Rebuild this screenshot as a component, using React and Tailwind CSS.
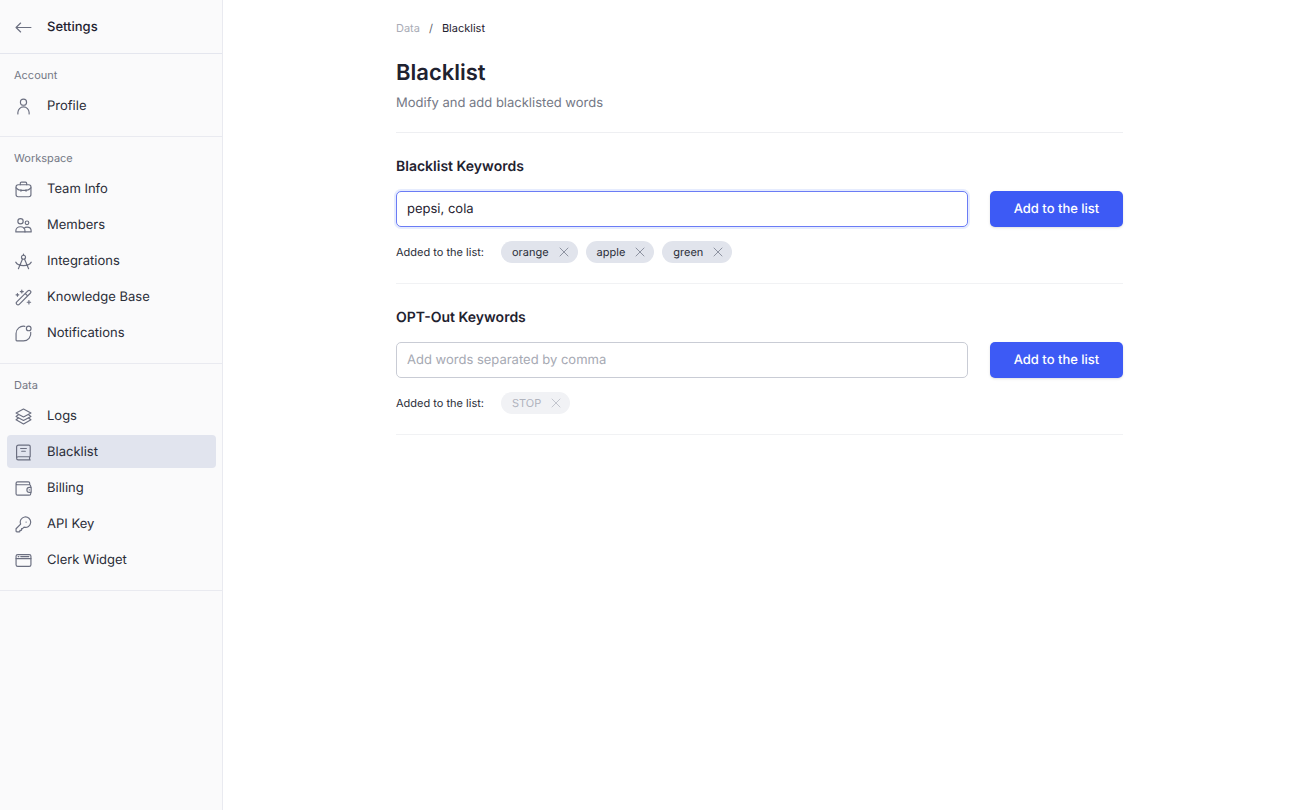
import React, { useState } from 'react';
import clsx from 'clsx';

const Icon = ({ children }) => (
  <svg
    viewBox="0 0 16 16"
    className="w-[17px] h-[17px] shrink-0 text-[#6b6f80]"
    fill="none"
    stroke="currentColor"
    strokeWidth="1.1"
    strokeLinecap="round"
    strokeLinejoin="round"
    aria-hidden="true"
  >
    {children}
  </svg>
);

const BackIcon = () => (
  <Icon>
    <path d="M15 8H1M5.3 3.8L1 8l4.3 4.2" />
  </Icon>
);

const ProfileIcon = () => (
  <Icon>
    <circle cx="8" cy="3.9" r="2.9" />
    <path d="M2.7 15v-1.3a5.3 5.3 0 0 1 10.6 0V15" />
  </Icon>
);

const TeamIcon = () => (
  <Icon>
    <rect x="1" y="3.5" width="14" height="11.3" rx="2" />
    <path d="M5 3.5V2.3C5 1.6 5.5 1 6.2 1h3.6c.7 0 1.2.6 1.2 1.3v1.2" />
    <path d="M1 6.4c1.2 1.4 2.7 2.2 4.6 2.5h4.8c1.9-.3 3.4-1.1 4.6-2.5M5.6 8v1.6M10.4 8v1.6" />
  </Icon>
);

const MembersIcon = () => (
  <Icon>
    <circle cx="5.2" cy="4" r="2.5" />
    <circle cx="11.3" cy="5.5" r="1.7" />
    <path d="M.8 14v-.9c0-2.2 1.800-3.9 4.3-3.9s4.3 1.7 4.3 3.9v.9z" />
    <path d="M9.4 14h5.800v-.9c0-2-1.6-3.5-3.8-3.5-1.2 0-2.2.4-2.9 1.1" />
  </Icon>
);

const IntegrationsIcon = () => (
  <Icon>
    <circle cx="8" cy="4" r="1.9" />
    <path d="M8 2.1V1M7.1 5.7L3.2 14.8M8.9 5.7l3.9 9.1M.7 8.6c1.2 2.1 4 3.3 7.3 3.3s6.1-1.2 7.3-3.3" />
  </Icon>
);

const KnowledgeIcon = () => (
  <Icon>
    <path d="M12.1 1.7a1.6 1.6 0 0 1 2.3 2.3L4 14.4a1.6 1.6 0 0 1-2.3-2.3zM9.6 4.2l2.3 2.3" />
    <path d="M6.4 1v2.8M5 2.4h2.8M2.3 4.2v2.6M1 5.5h2.6M13.1 10.9v3.2M11.5 12.5h3.2" />
  </Icon>
);

const NotificationsIcon = () => (
  <Icon>
    <circle cx="12.9" cy="3.2" r="2.2" />
    <path d="M9.3 1.3A6.9 6.9 0 0 0 1 8.1v6.1c0 .4.3.7.7.7h6.2a6.9 6.9 0 0 0 6.9-8.1" />
  </Icon>
);

const LogsIcon = () => (
  <Icon>
    <path d="M8 1l7 3.7-7 3.7-7-3.7z" />
    <path d="M3.2 6.3L1 7.9l7 3.8 7-3.8-2.2-1.6" />
    <path d="M3.2 9.5L1 11.1l7 3.9 7-3.9-2.2-1.6" />
  </Icon>
);

const BlacklistIcon = () => (
  <Icon>
    <path d="M14.3 12V2.3c0-.7-.6-1.3-1.3-1.3H3.4c-1.1 0-1.9.8-1.9 1.9v10.6M14.3 12H3a1.5 1.5 0 0 0 0 3h11.3M13.7 12v3" />
    <path d="M5.3 4.2h5.4M6.3 6.8h3.4" />
  </Icon>
);

const BillingIcon = () => (
  <Icon>
    <path d="M14.8 6.6V5.9c0-.8-.6-1.4-1.4-1.4h-11a1.4 1.4 0 0 1 0-2.8h10.2c.7 0 1.2.5 1.2 1.2v1.6M1 3.1v9.8c0 .8.6 1.4 1.4 1.4h11c.8 0 1.4-.6 1.4-1.4v-.8" />
    <path d="M15.2 7h-1.7a2.3 2.3 0 0 0 0 4.6h1.7zM13.4 9.3h.1" />
  </Icon>
);

const KeyIcon = () => (
  <Icon>
    <path d="M5.3 7.6a4.9 4.9 0 1 1 3.2 2.9l-1.4 1.4h-.9V13c0 .3-.3.6-.6.6h-1v.8c0 .3-.3.6-.6.6H1.8c-.5 0-.8-.3-.8-.8V12z" />
    <path d="M10.4 5.7h.1" />
  </Icon>
);

const WidgetIcon = () => (
  <Icon>
    <rect x="1" y="2.4" width="14" height="11.2" rx="1.6" />
    <path d="M1 6.2h14M3 4.3h.6M5.4 4.3H13" />
  </Icon>
);

const sections = [
  {
    title: 'Account',
    items: [{ label: 'Profile', icon: ProfileIcon }],
  },
  {
    title: 'Workspace',
    items: [
      { label: 'Team Info', icon: TeamIcon },
      { label: 'Members', icon: MembersIcon },
      { label: 'Integrations', icon: IntegrationsIcon },
      { label: 'Knowledge Base', icon: KnowledgeIcon },
      { label: 'Notifications', icon: NotificationsIcon },
    ],
  },
  {
    title: 'Data',
    items: [
      { label: 'Logs', icon: LogsIcon },
      { label: 'Blacklist', icon: BlacklistIcon, active: true },
      { label: 'Billing', icon: BillingIcon },
      { label: 'API Key', icon: KeyIcon },
      { label: 'Clerk Widget', icon: WidgetIcon },
    ],
  },
];

const Sidebar = () => (
  <aside className="w-[223px] shrink-0 bg-[#fafafb] border-r border-[#e9eaf0]">
    <a href="#" className="flex items-center gap-[15px] h-[54px] pt-[2px] px-[15px] border-b border-[#e4e6ee] text-[13px] leading-[21px] font-medium text-[#1f2230]">
      <BackIcon />
      Settings
    </a>

    {sections.map((section) => (
      <nav key={section.title} aria-label={section.title} className="pl-[7px] pr-[6px] pt-[13px] pb-[14px] border-b border-[#e9eaf0]">
        <h2 className="px-[7px] mb-[6px] text-[11px] leading-4 text-[#747885]">{section.title}</h2>
        <ul className="flex flex-col gap-[3px]">
          {section.items.map(({ label, icon: ItemIcon, active }) => (
            <li key={label}>
              <a
                href="#"
                aria-current={active ? 'page' : undefined}
                className={clsx(
                  'flex items-center gap-[15px] h-[33px] pt-[2px] px-2 rounded text-[13px] leading-[21px] text-[#2a2d38]',
                  active ? 'bg-[#e1e4ee]' : 'hover:bg-[#f0f1f6]'
                )}
              >
                <ItemIcon />
                {label}
              </a>
            </li>
          ))}
        </ul>
      </nav>
    ))}
  </aside>
);

const Chip = ({ label, disabled, onRemove }) => (
  <li
    className={clsx(
      'flex items-center gap-[10px] h-[22px] pl-[11px] pr-[9px] rounded-full text-[11px] leading-4',
      disabled ? 'bg-[#f1f2f5] text-[#b0b3bd]' : 'bg-[#e1e4ec] text-[#2a2d38]'
    )}
  >
    {label}
    <button type="button" aria-label={`Remove ${label}`} disabled={disabled} onClick={onRemove}>
      <svg
        viewBox="0 0 10 10"
        className={clsx('w-[10px] h-[10px]', disabled ? 'text-[#c3c6ce]' : 'text-[#8e93a1]')}
        fill="none"
        stroke="currentColor"
        strokeLinecap="round"
      >
        <path d="M1 1l8 8M9 1L1 9" />
      </svg>
    </button>
  </li>
);

const KeywordSection = ({ id, title, initialValue = '', initialWords, highlighted, locked }) => {
  const [value, setValue] = useState(initialValue);
  const [words, setWords] = useState(initialWords);

  const addWords = (e) => {
    e.preventDefault();
    const added = value.split(',').map((w) => w.trim()).filter((w) => w && !words.includes(w));
    setWords([...words, ...added]);
    setValue('');
  };

  return (
    <section className="pt-[22px] pb-5 border-b border-[#f1f2f4]">
      <form onSubmit={addWords}>
        <label htmlFor={id} className="block text-[14px] leading-6 font-semibold text-[#1f2230]">
          {title}
        </label>
        <div className="flex gap-[22px] mt-3">
          <input
            id={id}
            type="text"
            value={value}
            onChange={(e) => setValue(e.target.value)}
            placeholder="Add words separated by comma"
            className={clsx(
              'flex-1 min-w-0 h-9 px-[10px] rounded-[5px] border bg-white text-[13px] text-[#1f2230] placeholder:text-[#a6a9b3] outline-none focus:border-[#6b7cf5] [text-rendering:geometricPrecision]',
              highlighted ? 'border-[#6b7cf5] ring-2 ring-[#e6ecfe]' : 'border-[#c9ccd5]'
            )}
          />
          <button type="submit" className="w-[133px] h-9 rounded-[5px] bg-[#3d5af5] text-white text-[13px] leading-5 font-medium shadow-sm hover:bg-[#314de0] [text-rendering:geometricPrecision]">
            Add to the list
          </button>
        </div>
      </form>

      <div className="flex items-center gap-[17px] mt-[14px]">
        <span className="text-[11px] leading-4 text-[#2a2d38]">Added to the list:</span>
        <ul className="flex flex-wrap gap-2">
          {words.map((word) => (
            <Chip key={word} label={word} disabled={locked} onRemove={() => setWords(words.filter((w) => w !== word))} />
          ))}
        </ul>
      </div>
    </section>
  );
};

const App = () => {
  return (
    <div className="flex min-h-screen bg-white font-[Inter,sans-serif] [text-rendering:geometricPrecision]">
      <Sidebar />

      <main className="flex-1 min-w-0 px-6">
        <div className="max-w-[727px] mx-auto pt-5">
          {/* Breadcrumb */}
          <nav aria-label="Breadcrumb" className="flex gap-[9px] text-[11px] leading-4">
            <a href="#" className="text-[#a9acb6]">Data</a>
            <span className="text-[#5c606c]">/</span>
            <span className="text-[#1f2230]">Blacklist</span>
          </nav>

          <header className="pt-[23px] pb-[19px] border-b border-[#eeeff2]">
            <h1 className="text-[22px] leading-7 font-semibold text-[#1f2230]">Blacklist</h1>
            <p className="mt-[6px] text-[13px] leading-5 text-[#747885]">Modify and add blacklisted words</p>
          </header>

          <KeywordSection
            id="blacklist-keywords"
            title="Blacklist Keywords"
            initialValue="pepsi, cola"
            initialWords={['orange', 'apple', 'green']}
            highlighted
          />
          <KeywordSection id="opt-out-keywords" title="OPT-Out Keywords" initialWords={['STOP']} locked />
        </div>
      </main>
    </div>
  );
};

export default App;
